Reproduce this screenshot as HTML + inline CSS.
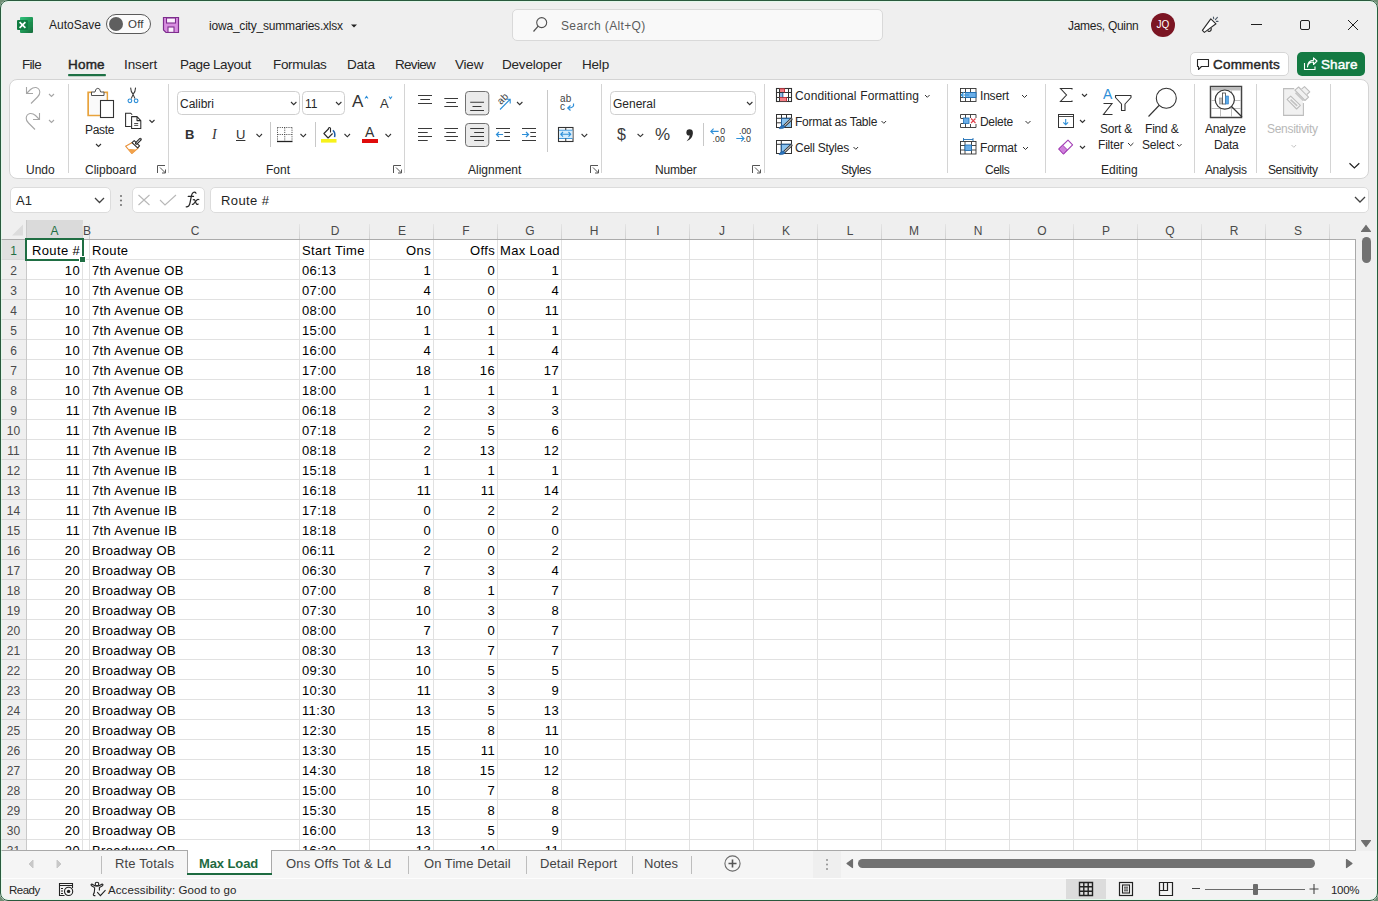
<!DOCTYPE html>
<html><head><meta charset="utf-8"><style>
*{box-sizing:border-box;margin:0;padding:0}
html,body{width:1378px;height:901px;overflow:hidden;background:#6f8f74}
body{font-family:"Liberation Sans",sans-serif;color:#262626;position:relative}
#win{position:absolute;left:0;top:0;width:1378px;height:901px;background:#efefef;border-radius:8px;overflow:hidden}
#frame{position:absolute;left:0;top:0;width:1378px;height:901px;border:1px solid #2a5a3e;border-radius:8px;pointer-events:none;box-shadow:inset 0 0 0 1px rgba(215,255,230,0.55)}
.a{position:absolute;white-space:nowrap}
.t12{font-size:12px;line-height:14px}
.t13{font-size:13px;line-height:15px}
/* title */
#title .txt{position:absolute;white-space:nowrap}
/* ribbon */
#ribbon{position:absolute;left:9px;top:79px;width:1360px;height:100px;background:#fff;border:1px solid #d4d4d4;border-radius:8px}
.sep{position:absolute;width:1px;background:#d6d6d6}
.glabel{position:absolute;top:163px;font-size:12px;line-height:14px;white-space:nowrap;color:#262626}
/* grid */
#grid{position:absolute;left:0;top:0;width:1378px;height:901px}
.colhdr{position:absolute;left:1px;top:220px;width:1355px;height:20px;background:#efefef}
.selhdrA{position:absolute;left:27px;top:220px;width:56px;height:19px;background:#dadada}
.selhdr1{position:absolute;left:1px;top:240px;width:25px;height:19px;background:#e0e0e0}
.hsep{position:absolute;top:224px;width:1px;height:15px;background:linear-gradient(#e4e4e4,#cfcfcf)}
.ch{position:absolute;top:220px;height:19px;line-height:23px;text-align:center;font-size:12px;color:#4a4a4a}
.ch.sel{color:#1f6f43}
.cells{position:absolute;left:26px;top:239px;width:1330px;height:612px;background:#fff;border-right:1px solid #a9a9a9;border-bottom:1px solid #a9a9a9}
.vl{position:absolute;top:240px;width:1px;height:610px;background:#e1e1e1}
.hl{position:absolute;left:26px;width:1329px;height:1px;background:#e1e1e1}
.rh{position:absolute;left:1px;width:25px;height:20px;line-height:23px;text-align:center;font-size:12px;color:#4a4a4a;background:#efefef;border-bottom:1px solid #d8d8d8}
.rhsep{position:absolute;left:26px;top:220px;width:1px;height:631px;background:#c9c9c9}
.hdrline{position:absolute;left:1px;top:239px;width:1355px;height:1px;background:#ababab}
.rh.sel{background:#e0e0e0;color:#1f6f43}
.ct{position:absolute;height:20px;line-height:20px;font-size:13px;letter-spacing:0.35px;color:#000;white-space:nowrap}
.ct.r{text-align:right}
.gridclip{position:absolute;left:0;top:851px;width:1378px;height:50px;background:#efefef}
.selbox{position:absolute;left:25px;top:238px;width:59px;height:23px;border:2px solid #1f6e43}
.fillh{position:absolute;left:80px;top:257px;width:5px;height:5px;background:#1f6e43;border:1px solid #fff;box-sizing:content-box;margin:-1px}

.tm{top:57px;font-size:13.5px;line-height:15px;color:#262626}

</style></head><body>
<div id="win">
<div id="title">
<svg class="a" style="left:16px;top:16px" width="18" height="18" viewBox="0 0 18 18">
<defs><linearGradient id="xg" x1="0" y1="0" x2="1" y2="1"><stop offset="0" stop-color="#33c27e"/><stop offset="0.5" stop-color="#1f9a57"/><stop offset="1" stop-color="#166b3c"/></linearGradient></defs>
<rect x="4" y="1" width="13" height="16" rx="1" fill="url(#xg)"/>
<rect x="4" y="6" width="13" height="5" fill="#1a8a4b" opacity="0.6"/>
<rect x="1" y="4" width="11" height="10" rx="1" fill="#107c41"/>
<path d="M3.6 6.2 L9.4 11.8 M9.4 6.2 L3.6 11.8" stroke="#fff" stroke-width="1.7"/>
</svg>
<div class="a" style="left:49px;top:18px;font-size:12px;line-height:14px;color:#1f1f1f">AutoSave</div>
<div class="a" style="left:106px;top:14px;width:45px;height:20px;border:1.4px solid #5a5a5a;border-radius:10px;background:#fbfbfb"></div>
<div class="a" style="left:109px;top:17px;width:14px;height:14px;border-radius:7px;background:#5f5f5f"></div>
<div class="a" style="left:128px;top:18px;font-size:11.5px;line-height:13px;letter-spacing:0.2px;color:#3a3a3a">Off</div>
<svg class="a" style="left:162px;top:16px" width="18" height="18" viewBox="0 0 18 18">
<path d="M1.5 1.5 H16.5 V16.5 H4 L1.5 14 Z" fill="#d88de0" stroke="#7e2d8e" stroke-width="1.2"/>
<rect x="4.5" y="2" width="9" height="5" fill="#fbeffc" stroke="#7e2d8e" stroke-width="1.1"/>
<rect x="6" y="11" width="6" height="5.4" fill="#fbeffc" stroke="#7e2d8e" stroke-width="1.1"/>
</svg>
<div class="a" style="left:209px;top:19px;font-size:12px;line-height:14px;letter-spacing:-0.2px;color:#1f1f1f">iowa_city_summaries.xlsx</div>
<svg class="a" style="left:350px;top:23px" width="8" height="6"><path d="M1 1.5 H7 L4 4.5 Z" fill="#222"/></svg>
<div class="a" style="left:512px;top:9px;width:371px;height:32px;background:#f9f9f9;border:1px solid #d9d9d9;border-radius:5px"></div>
<svg class="a" style="left:532px;top:16px" width="16" height="17"><circle cx="9.7" cy="6.6" r="5" fill="none" stroke="#505050" stroke-width="1.1"/><path d="M6.2 10.2 L1.5 15.5" stroke="#505050" stroke-width="1.2"/></svg>
<div class="a" style="left:561px;top:19px;font-size:12px;line-height:14px;letter-spacing:0.35px;color:#5c5c5c">Search (Alt+Q)</div>
<div class="a" style="left:1068px;top:19px;font-size:12px;line-height:14px;letter-spacing:-0.3px;color:#1f1f1f">James, Quinn</div>
<div class="a" style="left:1151px;top:13px;width:24px;height:24px;border-radius:12px;background:#7b1523"></div>
<div class="a" style="left:1151px;top:19px;width:24px;text-align:center;font-size:10px;line-height:12px;color:#fff">JQ</div>
<svg class="a" style="left:1198px;top:12px" width="24" height="24" viewBox="1198 12 24 24">
<path d="M1202.4 30.4 L1210.8 18.9 L1216 23.8 L1204.4 32.4 Z" fill="#fff" stroke="#2b2b2b" stroke-width="1.1" stroke-linejoin="round"/>
<path d="M1211.2 28 Q1211.6 31 1209.4 31.5 Q1208 31.7 1207.8 30.4" fill="none" stroke="#2b2b2b" stroke-width="1.1"/>
<path d="M1213.4 17 L1213.7 18.6 M1215.4 19.6 L1217.4 17.4 M1216.4 21.4 H1218" stroke="#4a5866" stroke-width="1.1" stroke-linecap="round"/>
</svg>
<div class="a" style="left:1251px;top:24px;width:11px;height:1px;background:#1f1f1f"></div>
<div class="a" style="left:1300px;top:20px;width:10px;height:10px;border:1px solid #1f1f1f;border-radius:2px"></div>
<svg class="a" style="left:1347px;top:19px" width="12" height="12"><path d="M1 1 L11 11 M11 1 L1 11" stroke="#1f1f1f" stroke-width="1"/></svg>
<!-- comments / share -->
<div class="a" style="left:1190px;top:52px;width:99px;height:24px;background:#fff;border:1px solid #d6d6d6;border-radius:5px"></div>
<svg class="a" style="left:1196px;top:58px" width="14" height="13"><path d="M1.5 1.5 H12.5 V8.5 H5.5 L2.5 11.5 V8.5 H1.5 Z" fill="none" stroke="#262626" stroke-width="1.1" stroke-linejoin="round"/></svg>
<div class="a" style="left:1213px;top:57px;font-size:13.5px;line-height:15px;letter-spacing:0.2px;-webkit-text-stroke:0.45px #262626;color:#262626">Comments</div>
<div class="a" style="left:1297px;top:52px;width:68px;height:24px;background:#147a43;border-radius:5px"></div>
<svg class="a" style="left:1303px;top:57px" width="15" height="14" viewBox="0 0 15 14"><path d="M1.5 6 V12.5 H12 V9.5" fill="none" stroke="#fff" stroke-width="1.1"/><path d="M4.5 10 Q5 5 10.5 5 V7.5 L14 4 L10.5 0.8 V3.2 Q4.5 3.5 4.5 10 Z" fill="none" stroke="#fff" stroke-width="1.1" stroke-linejoin="round"/></svg>
<div class="a" style="left:1321px;top:57px;font-size:13.5px;line-height:15px;letter-spacing:0.1px;-webkit-text-stroke:0.45px #fff;color:#fff">Share</div>
</div>
<div id="menu">
<div class="a tm" style="left:22px;letter-spacing:-0.7px">File</div>
<div class="a tm" style="left:68px;letter-spacing:0.2px;-webkit-text-stroke:0.45px #262626">Home</div>
<div class="a" style="left:68px;top:74px;width:38px;height:2px;border-radius:1px;background:#1e7145;box-shadow:0 0.5px 0 rgba(30,113,69,0.45)"></div>
<div class="a tm" style="left:124px;letter-spacing:-0.1px">Insert</div>
<div class="a tm" style="left:180px;letter-spacing:-0.45px">Page Layout</div>
<div class="a tm" style="left:273px;letter-spacing:-0.35px">Formulas</div>
<div class="a tm" style="left:347px;letter-spacing:-0.2px">Data</div>
<div class="a tm" style="left:395px;letter-spacing:-0.7px">Review</div>
<div class="a tm" style="left:455px;letter-spacing:-0.2px">View</div>
<div class="a tm" style="left:502px;letter-spacing:-0.2px">Developer</div>
<div class="a tm" style="left:582px;letter-spacing:-0.2px">Help</div>
</div>
<!-- formula bar -->
<div class="a" style="left:10px;top:187px;width:101px;height:26px;background:#fff;border:1px solid #dcdcdc;border-radius:5px"></div>
<div class="a t13" style="left:16px;top:193px;color:#262626">A1</div>
<svg class="a" style="left:94px;top:197px" width="11" height="7"><path d="M1 1 L5.5 5.5 L10 1" stroke="#424242" stroke-width="1.3" fill="none"/></svg>
<svg class="a" style="left:119px;top:194px" width="4" height="13"><circle cx="2" cy="2" r="1.1" fill="#777"/><circle cx="2" cy="6.5" r="1.1" fill="#777"/><circle cx="2" cy="11" r="1.1" fill="#777"/></svg>
<div class="a" style="left:132px;top:187px;width:73px;height:26px;background:#fff;border:1px solid #dcdcdc;border-radius:5px"></div>
<svg class="a" style="left:137px;top:194px" width="14" height="12"><path d="M1.5 1 L12.5 11 M12.5 1 L1.5 11" stroke="#b8b8b8" stroke-width="1.1" fill="none"/></svg>
<svg class="a" style="left:159px;top:194px" width="18" height="12"><path d="M1 6 L6 11 L17 1" stroke="#b8b8b8" stroke-width="1.1" fill="none"/></svg>
<svg class="a" style="left:180px;top:188px" width="24" height="22" viewBox="180 188 24 22"><g fill="none" stroke="#262626" stroke-linecap="round">
<path d="M196 193.2 Q195 191.5 193.2 192.5 Q191.8 193.4 191.2 196.8 L190 202.8 Q189.2 206.9 186.2 206.8" stroke-width="1.25"/>
<path d="M188.2 196.4 H193.6" stroke-width="1.1"/>
<path d="M193.3 199.8 Q194.4 199 194.9 200.3 L196.2 203.6 Q196.8 205 198.2 204" stroke-width="1.15"/>
<path d="M198.9 199.6 Q197.9 198.9 196.7 200.1 L193.8 203.7 Q193 204.8 192.3 204.3" stroke-width="1.15"/>
</g></svg>
<div class="a" style="left:210px;top:187px;width:1159px;height:26px;background:#fff;border:1px solid #dcdcdc;border-radius:5px"></div>
<div class="a t13" style="left:221px;top:193px;letter-spacing:0.4px;color:#1f1f1f">Route #</div>
<svg class="a" style="left:1354px;top:196px" width="12" height="8"><path d="M1 1 L6 6 L11 1" stroke="#424242" stroke-width="1.3" fill="none"/></svg>

<div id="ribbon"></div>
<svg class="a" style="left:0;top:0" width="1378" height="180" viewBox="0 0 1378 180">
<g fill="none" stroke-width="1" shape-rendering="geometricPrecision">
<!-- separators -->
<path d="M68.5 84 V173 M168.5 84 V173 M404.5 84 V173 M601.5 84 V173 M764.5 84 V173 M947.5 84 V173 M1045.5 84 V173 M1194.5 84 V173 M1256.5 84 V173 M1330.5 84 V173" stroke="#d4d4d4"/>
<path d="M270.5 122 V147 M315.5 122 V147 M547.5 90 V152 M703.5 123 V146" stroke="#c8c8c8"/>
<!-- undo / redo -->
<g stroke="#a6a6a6" stroke-width="1.1">
<path d="M26.5 87 V93.5 H33"/>
<path d="M27 93 L30.5 89.5 Q33 87.2 36 87.5 Q39.5 88.3 39.8 92 Q40 94.5 37.5 97 L31 103.5"/>
<path d="M39.5 113 V119.5 H33"/>
<path d="M39 119 L35.5 115.5 Q33 113.2 30 113.5 Q26.5 114.3 26.2 118 Q26 120.5 28.5 123 L35 129.5"/>
<path d="M49 94 L51.5 96.5 L54 94 M49 120 L51.5 122.5 L54 120"/>
</g>
<!-- paste -->
<path d="M92 92.5 H88.2 V115.3 H100" stroke="#e8a33d" stroke-width="1.8"/>
<path d="M103.5 92.5 H107.2 V100" stroke="#e8a33d" stroke-width="1.8"/>
<rect x="89" y="93.3" width="17.5" height="21.2" fill="#fafafa" stroke="none"/>
<path d="M91.5 95.5 V92 H95 Q95.5 88.3 97.8 88.3 Q100.2 88.3 100.6 92 H104 V95.5 Z" fill="#fff" stroke="#505050" stroke-width="1"/>
<rect x="100.5" y="100.5" width="13" height="17" fill="#fff" stroke="#333" stroke-width="1.1"/>
<path d="M96 144 L98.5 146.5 L101 144" stroke="#333" stroke-width="1.1"/>
<!-- cut -->
<path d="M130.6 87.6 Q130.8 91.6 133 94.2 L135 98.6 M135.6 87.6 Q135.4 91.6 133.2 94.2 L131.2 98.6" stroke="#3a3a3a" stroke-width="1.05"/>
<circle cx="129.9" cy="100.8" r="1.85" stroke="#2e8fd8" stroke-width="1.15"/>
<circle cx="136.1" cy="100.8" r="1.85" stroke="#2e8fd8" stroke-width="1.15"/>
<!-- copy -->
<path d="M130.8 126.5 H125.6 V113.2 H130.6 L132.2 114.6" stroke="#2b2b2b" stroke-width="1.05"/>
<path d="M131.6 116.6 H137 L140.8 120.6 V128.5 H131.6 Z M137 116.6 V120.6 H140.8" fill="#fff" stroke="#2b2b2b" stroke-width="1.05" stroke-linejoin="round"/>
<path d="M134.2 123.5 H138.2 M134.2 125.4 H138.2" stroke="#3a3a3a" stroke-width="0.9"/>
<path d="M149.5 120 L152 122.5 L154.5 120" stroke="#333" stroke-width="1.1"/>
<!-- format painter -->
<path d="M125.6 146.2 L132.3 142.6 L138.4 147.8 L131.8 153.5 Z" fill="#fff" stroke="#e8913a" stroke-width="1.1" stroke-linejoin="round"/>
<path d="M127.8 149.2 Q132 148.5 136.6 149.8 L131.8 153.5 Z" fill="#f2a24a" stroke="none"/>
<path d="M132 142.6 L134.2 140.6 L139.6 145.8 L137.6 147.9 Z" fill="#fff" stroke="#2e2e2e" stroke-width="1.1" stroke-linejoin="round"/>
<path d="M136.4 143.2 L140.3 139.4" stroke="#2e2e2e" stroke-width="3" stroke-linecap="round"/>
<path d="M136.8 142.8 L140.1 139.6" stroke="#fff" stroke-width="1" stroke-linecap="round"/>
<!-- font boxes -->
<rect x="177.5" y="91.5" width="122" height="23" rx="4" fill="#fff" stroke="#cfcfcf"/>
<path d="M291 102 L293.7 104.7 L296.4 102" stroke="#333" stroke-width="1.1"/>
<rect x="302.5" y="91.5" width="42" height="23" rx="4" fill="#fff" stroke="#cfcfcf"/>
<path d="M336 102 L338.7 104.7 L341.4 102" stroke="#333" stroke-width="1.1"/>
<path d="M365 98.5 L366.5 96.5 L368 98.5" stroke="#2e8fd8" stroke-width="1.1"/>
<path d="M389 96.5 L390.5 98.5 L392 96.5" stroke="#2e8fd8" stroke-width="1.1"/>
<!-- borders icon -->
<path d="M277.5 127.5 H292 M277.5 127.5 V141 M292 127.5 V141 M284.75 127.5 V141 M277.5 134.5 H292" stroke="#444" stroke-width="1" stroke-dasharray="1 1.2"/>
<path d="M277 141.5 H292.5" stroke="#222" stroke-width="1.3"/>
<path d="M256.5 134 L259.3 136.8 L262 134 M300.5 134 L303.3 136.8 L306 134 M344.5 134 L347.3 136.8 L350 134 M385.5 134 L388.3 136.8 L391 134" stroke="#333" stroke-width="1.1"/>
<!-- fill color -->
<path d="M328.4 129 L323.9 133.5 L328.1 138 L332.6 133.5" stroke="#2a2a2a" stroke-width="1.1" stroke-linejoin="round"/>
<path d="M328.4 129.5 V128.4 Q329.4 126.6 330.5 128.4 V132.4" stroke="#2a2a2a" stroke-width="1.1"/>
<path d="M332.8 130.4 Q335.6 132.5 334.6 137.2" stroke="#1f5fa8" stroke-width="1.5"/>
<rect x="321" y="139" width="15.5" height="3.6" fill="#f7f21b" stroke="none"/>
<rect x="362" y="139" width="16" height="4" fill="#e00b0b" stroke="none"/>
<!-- alignment lines -->
<g stroke="#3a3a3a" stroke-width="1.05">
<path d="M418 95.5 H432 M420.3 99.5 H430 M418 103.5 H432"/>
<path d="M444.3 98.5 H458 M446.3 102.5 H456 M444.3 106.5 H458"/>
<path d="M418 128.5 H432 M418 132.5 H427.7 M418 136.5 H432 M418 140.5 H427.7"/>
<path d="M444.3 128.5 H458 M446.3 132.5 H455.8 M444.3 136.5 H458 M446.3 140.5 H455.8"/>
</g>
<rect x="465.5" y="91.5" width="23.3" height="23.3" rx="3.2" fill="#ebebeb" stroke="#707070"/>
<rect x="465.5" y="123.5" width="23.3" height="23" rx="3.2" fill="#ebebeb" stroke="#707070"/>
<g stroke="#3a3a3a" stroke-width="1.05">
<path d="M470.2 102.3 H484 M472.5 106.4 H481.5 M470.2 110.5 H484"/>
<path d="M470.2 128.5 H484 M474.2 132.5 H484 M470.2 136.5 H484 M474.2 140.5 H484"/>
<path d="M496 128.5 H510 M504.3 132.5 H510 M504.3 136.5 H510 M496 140.5 H510"/>
<path d="M522 128.5 H536 M530.3 132.5 H536 M530.3 136.5 H536 M522 140.5 H536"/>
</g>
<path d="M503 134.5 H496.5 M499 132 L496.5 134.5 L499 137" stroke="#2e8fd8" stroke-width="1.2"/>
<path d="M522 134.5 H528.5 M526 132 L528.5 134.5 L526 137" stroke="#2e8fd8" stroke-width="1.2"/>
<!-- orientation -->
<path d="M500 109.5 L510 99.5 M506 99.3 H510.2 V103.5" stroke="#2e8fd8" stroke-width="1.1"/>
<path d="M517 102 L519.7 104.7 L522.4 102" stroke="#333" stroke-width="1.1"/>
<!-- wrap text arrow -->
<path d="M573.5 103.5 Q574.5 108 568 108 M570.5 105.5 L567.8 108 L570.5 110.5" stroke="#2e8fd8" stroke-width="1.2"/>
<!-- merge -->
<rect x="558.5" y="127.5" width="14.5" height="14" fill="#fff" stroke="#333" stroke-width="1.1"/>
<rect x="559" y="130.2" width="13.5" height="8.3" fill="#d5ecfb" stroke="none"/><path d="M559 130.2 H572.5 M559 138.5 H572.5" stroke="#2e8fd8" stroke-width="0.9"/>
<path d="M565.75 127.5 V130 M565.75 138.5 V141.5" stroke="#333"/>
<path d="M560.8 134.3 H570.7 M563 132 L560.8 134.3 L563 136.6 M568.5 132 L570.7 134.3 L568.5 136.6" stroke="#2e8fd8" stroke-width="1.1"/>
<path d="M581.6 134 L584.4 136.8 L587.2 134" stroke="#333" stroke-width="1.1"/>
<!-- number -->
<rect x="610.5" y="91.5" width="145" height="23" rx="4" fill="#fff" stroke="#cfcfcf"/>
<path d="M747 102 L749.7 104.7 L752.4 102" stroke="#333" stroke-width="1.1"/>
<path d="M637.6 134 L640.4 136.6 L643.2 134" stroke="#333" stroke-width="1.1"/>
<path d="M718.6 131.4 H710.8 M713.6 128.6 L710.8 131.4 L713.6 134.2" stroke="#2e8fd8" stroke-width="1.1"/>
<path d="M736.3 138.5 H744 M741.2 135.7 L744 138.5 L741.2 141.3" stroke="#2e8fd8" stroke-width="1.1"/>
<g stroke="none" fill="#333" font-family="Liberation Sans" font-size="8.8px">
<text x="720.3" y="133.7">0</text>
<text x="712.6" y="141.7">.00</text>
<text x="739" y="133.7">.00</text>
<text x="743.6" y="141.7">.0</text>
</g>
<circle cx="689.6" cy="132.4" r="3.2" fill="#2b2b2b" stroke="none"/><path d="M692.7 132.8 Q693 138.8 686.6 141.3 Q689.9 138.2 689.6 135.4 Z" fill="#2b2b2b" stroke="none"/>
<!-- dialog launchers -->
<g stroke="#555" stroke-width="1">
<path d="M157.5 173 V165.5 H165 M160 167.5 L165.5 173 M162 173 H165.5 V169.5"/>
<path d="M393.5 173 V165.5 H401 M396 167.5 L401.5 173 M398 173 H401.5 V169.5"/>
<path d="M590.5 173 V165.5 H598 M593 167.5 L598.5 173 M595 173 H598.5 V169.5"/>
<path d="M752.5 173 V165.5 H760 M755 167.5 L760.5 173 M757 173 H760.5 V169.5"/>
</g>
<!-- conditional formatting -->
<rect x="776.5" y="88.5" width="15" height="13" fill="#fff" stroke="#333" stroke-width="1.1"/>
<rect x="779.5" y="88.8" width="5" height="3.7" fill="#f47f86" stroke="none"/>
<rect x="779.5" y="97.5" width="7" height="3.7" fill="#f47f86" stroke="none"/>
<rect x="779.5" y="92.5" width="3" height="5" fill="#8dbbe6" stroke="none"/>
<path d="M779.5 88.5 V101.5 M788.5 88.5 V101.5 M776.5 92.5 H791.5 M776.5 97.5 H791.5" stroke="#333" stroke-width="1"/>
<path d="M779.5 88.8 H784.5 V92.5 M779.5 97.5 H786.5 V101.3" stroke="#c8353f" stroke-width="1"/>
<path d="M782.8 92.5 V97.5" stroke="#1f4f8a" stroke-width="1"/>
<!-- format as table -->
<rect x="776.5" y="114.5" width="15" height="13" fill="#fff" stroke="#333" stroke-width="1"/>
<path d="M781.5 114.5 V127.5 M786.5 114.5 V118.3 M776.5 118.3 H791.5 M776.5 122.8 H781.5" stroke="#333" stroke-width="1"/>
<rect x="782" y="118.8" width="9" height="8.2" fill="#8cc4f0" stroke="none"/>
<path d="M781.5 127.5 V118.3 H791.5" stroke="#1f5f9f" stroke-width="1"/>
<path d="M791.3 119.2 L784.3 126" stroke="#333" stroke-width="2.6" stroke-linecap="round"/>
<path d="M791.2 119.3 L784.5 125.8" stroke="#fff" stroke-width="1" stroke-linecap="round"/>
<path d="M779.2 128.6 Q780 125.6 783.6 125.2 L785 126.6 Q784.2 128.8 779.2 128.6 Z" fill="#2a73bd" stroke="#1f5f9f" stroke-width="0.7"/>
<!-- cell styles -->
<rect x="776.5" y="140.5" width="15" height="13" fill="#fff" stroke="#333" stroke-width="1"/>
<path d="M776.5 144.3 H791.5 M781.3 140.5 V153.5" stroke="#333" stroke-width="1"/>
<path d="M781.8 144.8 H791 V146 L783 153 H781.8 Z" fill="#8cc4f0" stroke="none"/>
<path d="M781.3 153.5 V144.3 H791.5" stroke="#1f5f9f" stroke-width="1"/>
<path d="M791.3 145.3 L784.3 152" stroke="#333" stroke-width="2.6" stroke-linecap="round"/>
<path d="M791.2 145.4 L784.5 151.8" stroke="#fff" stroke-width="1" stroke-linecap="round"/>
<path d="M779.2 154.6 Q780 151.6 783.6 151.2 L785 152.6 Q784.2 154.8 779.2 154.6 Z" fill="#2a73bd" stroke="#1f5f9f" stroke-width="0.7"/>
<path d="M925 95 L927.3 97.3 L929.6 95 M881.5 121 L883.8 123.3 L886.1 121 M853.5 147 L855.8 149.3 L858.1 147" stroke="#333" stroke-width="1"/>
<!-- cells: insert -->
<rect x="960.5" y="88.5" width="15.5" height="13" fill="#fff" stroke="#333" stroke-width="0.9"/>
<path d="M960.5 92.5 H976 M960.5 97.5 H976 M965.5 88.5 V101.5 M970.5 88.5 V101.5" stroke="#333" stroke-width="0.9"/>
<rect x="965.5" y="92.5" width="10.5" height="5" fill="#6aaee8" stroke="#1f6fb5" stroke-width="0.9"/>
<path d="M960.8 92.8 V97.2" stroke="#fff" stroke-width="0"/>
<rect x="961" y="93" width="4.3" height="4" fill="#fff" stroke="none"/>
<path d="M969 95 H961.2 M964 92.2 L961.2 95 L964 97.8" stroke="#2e8fd8" stroke-width="1.1"/>
<!-- delete -->
<path d="M960.5 114.5 H976 M960.5 127.5 H976 M965.5 114.5 V127.5 M970.5 114.5 V118 M970.5 124 V127.5 M960.5 114.5 V118 M960.5 124 V127.5 M976 114.5 V118 M976 124 V127.5 M960.5 118.5 H964 M960.5 123.5 H964" stroke="#333" stroke-width="0.9"/>
<rect x="963.5" y="118" width="5.5" height="5.5" fill="#6aaee8" stroke="#1f6fb5" stroke-width="0.8"/>
<path d="M971 118.5 L975.5 123 M975.5 118.5 L971 123" stroke="#e0404a" stroke-width="1.1"/>
<!-- format -->
<rect x="960.5" y="141.5" width="15.5" height="12.5" fill="#fff" stroke="#333" stroke-width="0.9"/>
<path d="M960.5 145.5 H976 M960.5 150 H976 M965 141.5 V154 M971.5 141.5 V154" stroke="#333" stroke-width="0.9"/>
<rect x="965" y="145" width="6.5" height="5.5" fill="#6aaee8" stroke="#1f6fb5" stroke-width="0.8"/>
<path d="M963.5 139.5 H973 M963.5 138 V141 M973 138 V141" stroke="#1f6fb5" stroke-width="0.9"/>
<path d="M1022 95 L1024.5 97.5 L1027 95 M1025.5 121 L1028 123.5 L1030.5 121 M1023 147 L1025.5 149.5 L1028 147" stroke="#333" stroke-width="1"/>
<!-- editing -->
<path d="M1072 89.5 V88.5 H1060.5 L1066.5 95 L1060.5 101.5 H1072 V100.5" stroke="#333" stroke-width="1.1"/>
<path d="M1082 94 L1084.5 96.5 L1087 94 M1080 120 L1082.5 122.5 L1085 120 M1080 146 L1082.5 148.5 L1085 146" stroke="#333" stroke-width="1.1"/>
<rect x="1058.5" y="114.5" width="15" height="13" fill="#fff" stroke="#333" stroke-width="1"/>
<path d="M1058.5 116.5 H1073.5" stroke="#333" stroke-width="0.9"/>
<path d="M1065.7 119 V124.5 M1063.3 122.3 L1065.7 124.7 L1068.1 122.3" stroke="#2e8fd8" stroke-width="1.1"/>
<path d="M1058.8 149 L1068 140.2 L1072.6 144.8 L1063.4 154 Z" fill="#fff" stroke="#a33fb5" stroke-width="1.1" stroke-linejoin="round"/>
<path d="M1058.8 149 L1062.7 145.2 L1067.3 149.8 L1063.4 154 Z" fill="#cf7fdc" stroke="#a33fb5" stroke-width="1" stroke-linejoin="round"/>
<path d="M1103.5 112 V89 M1104 100.5 L1108 89.5 L1112.5 100.5 M1105.2 96.5 H1110.8" stroke="#2e8fd8" stroke-width="0" />
<path d="M1103.5 103.5 H1112 L1103.5 114.5 H1112.5" stroke="#333" stroke-width="1.1"/>
<path d="M1115.5 95.5 H1131 V97.5 L1125 104 V110.5 H1121.5 V104 L1115.5 97.5 Z" fill="#fff" stroke="#333" stroke-width="1.1" stroke-linejoin="round"/>
<path d="M1128 143 L1130.7 145.7 L1133.4 143 M1177 144 L1179.3 146.3 L1181.6 144" stroke="#333" stroke-width="1"/>
<circle cx="1166.3" cy="98.3" r="10" stroke="#333" stroke-width="1.1"/>
<path d="M1159 105.5 L1148.5 116.5" stroke="#333" stroke-width="1.1"/>
<!-- analyze data -->
<rect x="1210.5" y="86.5" width="31" height="31" fill="#fff" stroke="#444" stroke-width="1.5"/>
<rect x="1211" y="87" width="30" height="3.5" fill="#bdbdbd" stroke="none"/>
<path d="M1211 100.5 H1241 M1211 108.5 H1241 M1220.5 90.5 V117 M1231.5 90.5 V117" stroke="#bdbdbd" stroke-width="1"/>
<circle cx="1224.8" cy="99.6" r="9.6" fill="#fff" stroke="#333" stroke-width="1.2"/>
<rect x="1219.5" y="98" width="3" height="6" fill="#bdbdbd" stroke="#888" stroke-width="0.6"/>
<rect x="1222.5" y="93" width="3" height="11" fill="#fff" stroke="#444" stroke-width="0.8"/>
<rect x="1225.5" y="96" width="3" height="8" fill="#5aaae8" stroke="#2e7bc4" stroke-width="0.6"/>
<path d="M1231.5 106.5 L1242 117" stroke="#333" stroke-width="1.3"/>
<!-- sensitivity -->
<path d="M1294.2 88.6 H1283.6 V115.4 H1303.4 V103" fill="#f1f1f1" stroke="#bdbdbd" stroke-width="1.1"/>
<path d="M1287.1 99.3 L1290.7 96.1 L1300.4 105.4 L1296.6 109 Z" fill="#f4f4f4" stroke="#bdbdbd" stroke-width="1.1" stroke-linejoin="round"/>
<path d="M1290.6 99.6 L1297.2 105.9" stroke="#c2c2c2" stroke-width="1.6"/>
<path d="M1294.9 90.2 L1298.6 87 L1308.6 97.2 L1305 100.5 Z" fill="#f1f1f1" stroke="#bdbdbd" stroke-width="1.1" stroke-linejoin="round"/>
<path d="M1295.6 92.6 L1303.6 100.6" stroke="#c8c8c8" stroke-width="2"/>
<path d="M1301.5 89.2 L1304.5 86.6 L1309.8 91.8 L1306.8 94.5" fill="#f1f1f1" stroke="#bdbdbd" stroke-width="1.1" stroke-linejoin="round"/>
<path d="M1291.5 145 L1293.8 147.3 L1296.1 145" stroke="#c4c4c4" stroke-width="1"/>
<path d="M1349.5 163.2 L1354.4 168 L1359.3 163.2" stroke="#222" stroke-width="1.2"/>
</g>
</svg>
<!-- ribbon text -->
<div class="a" style="left:180px;top:97px;font-size:12px;line-height:14px;color:#262626">Calibri</div>
<div class="a" style="left:305px;top:97px;font-size:12px;line-height:14px;color:#262626">11</div>
<div class="a" style="left:352px;top:93px;font-size:17px;line-height:18px;color:#333">A</div>
<div class="a" style="left:380px;top:97px;font-size:13px;line-height:14px;color:#333">A</div>
<div class="a" style="left:185px;top:127px;font-size:13px;line-height:15px;font-weight:bold;color:#333">B</div>
<div class="a" style="left:212px;top:127px;font-family:'Liberation Serif',serif;font-size:14px;line-height:15px;font-style:italic;color:#333">I</div>
<div class="a" style="left:236px;top:127px;font-size:13px;line-height:15px;text-decoration:underline;color:#333">U</div>
<div class="a" style="left:365px;top:125px;font-size:14px;line-height:15px;color:#333">A</div>
<div class="a" style="left:497px;top:93px;font-size:10px;line-height:11px;color:#444;transform:rotate(-45deg);transform-origin:50% 50%">ab</div>
<div class="a" style="left:560px;top:93px;font-size:10px;line-height:11px;color:#444;letter-spacing:0.3px">ab</div>
<div class="a" style="left:560px;top:100.5px;font-size:10px;line-height:11px;color:#444">c</div>
<div class="a" style="left:613px;top:97px;font-size:12px;line-height:14px;color:#262626">General</div>
<div class="a" style="left:617px;top:126px;font-size:16px;line-height:18px;color:#3a3a3a">$</div>
<div class="a" style="left:655px;top:126px;font-size:17px;line-height:18px;color:#3a3a3a">%</div>
<div class="a" style="left:795px;top:89px;font-size:12px;line-height:14px;letter-spacing:0.15px;color:#262626">Conditional Formatting</div>
<div class="a" style="left:795px;top:115px;font-size:12px;line-height:14px;letter-spacing:-0.25px;color:#262626">Format as Table</div>
<div class="a" style="left:795px;top:141px;font-size:12px;line-height:14px;letter-spacing:-0.25px;color:#262626">Cell Styles</div>
<div class="a" style="left:980px;top:89px;font-size:12px;line-height:14px;letter-spacing:-0.2px;color:#262626">Insert</div>
<div class="a" style="left:980px;top:115px;font-size:12px;line-height:14px;letter-spacing:-0.3px;color:#262626">Delete</div>
<div class="a" style="left:980px;top:141px;font-size:12px;line-height:14px;letter-spacing:-0.2px;color:#262626">Format</div>
<div class="a" style="left:1103px;top:86px;font-size:15.5px;line-height:15px;transform:scaleX(0.9);transform-origin:0 0;color:#2e8fd8">A</div>
<div class="a" style="left:1100px;top:122px;font-size:12px;line-height:14px;letter-spacing:-0.2px;color:#262626">Sort &amp;</div>
<div class="a" style="left:1098px;top:138px;font-size:12px;line-height:14px;letter-spacing:-0.2px;color:#262626">Filter</div>
<div class="a" style="left:1145px;top:122px;font-size:12px;line-height:14px;letter-spacing:-0.2px;color:#262626">Find &amp;</div>
<div class="a" style="left:1142px;top:138px;font-size:12px;line-height:14px;letter-spacing:-0.2px;color:#262626">Select</div>
<div class="a" style="left:1205px;top:122px;font-size:12px;line-height:14px;letter-spacing:-0.3px;color:#262626">Analyze</div>
<div class="a" style="left:1214px;top:138px;font-size:12px;line-height:14px;letter-spacing:-0.2px;color:#262626">Data</div>
<div class="a" style="left:1267px;top:122px;font-size:12px;line-height:14px;letter-spacing:-0.3px;color:#b8b8b8">Sensitivity</div>
<div class="a" style="left:85px;top:123px;font-size:12px;line-height:14px;letter-spacing:-0.3px;color:#262626">Paste</div>
<div class="glabel" style="left:26px">Undo</div>
<div class="glabel" style="left:85px">Clipboard</div>
<div class="glabel" style="left:266px">Font</div>
<div class="glabel" style="left:468px">Alignment</div>
<div class="glabel" style="left:655px;letter-spacing:-0.2px">Number</div>
<div class="glabel" style="left:841px;letter-spacing:-0.5px">Styles</div>
<div class="glabel" style="left:985px;letter-spacing:-0.5px">Cells</div>
<div class="glabel" style="left:1101px">Editing</div>
<div class="glabel" style="left:1205px;letter-spacing:-0.4px">Analysis</div>
<div class="glabel" style="left:1268px;letter-spacing:-0.4px">Sensitivity</div>

<div id="grid">
<div class="colhdr"></div>
<div class="selhdrA"></div><div class="selhdr1"></div>
<svg style="position:absolute;left:12px;top:224px" width="12" height="12"><path d="M11 0.5 L11 11.5 L0 11.5 Z" fill="#dcdcdc"/></svg>
<div class="hsep" style="left:82px"></div>
<div class="ch sel" style="left:26px;width:57px">A</div>
<div class="hsep" style="left:89px"></div>
<div class="ch" style="left:83px;width:7px">B</div>
<div class="hsep" style="left:299px"></div>
<div class="ch" style="left:90px;width:210px">C</div>
<div class="hsep" style="left:369px"></div>
<div class="ch" style="left:300px;width:70px">D</div>
<div class="hsep" style="left:433px"></div>
<div class="ch" style="left:370px;width:64px">E</div>
<div class="hsep" style="left:497px"></div>
<div class="ch" style="left:434px;width:64px">F</div>
<div class="hsep" style="left:561px"></div>
<div class="ch" style="left:498px;width:64px">G</div>
<div class="hsep" style="left:625px"></div>
<div class="ch" style="left:562px;width:64px">H</div>
<div class="hsep" style="left:689px"></div>
<div class="ch" style="left:626px;width:64px">I</div>
<div class="hsep" style="left:753px"></div>
<div class="ch" style="left:690px;width:64px">J</div>
<div class="hsep" style="left:817px"></div>
<div class="ch" style="left:754px;width:64px">K</div>
<div class="hsep" style="left:881px"></div>
<div class="ch" style="left:818px;width:64px">L</div>
<div class="hsep" style="left:945px"></div>
<div class="ch" style="left:882px;width:64px">M</div>
<div class="hsep" style="left:1009px"></div>
<div class="ch" style="left:946px;width:64px">N</div>
<div class="hsep" style="left:1073px"></div>
<div class="ch" style="left:1010px;width:64px">O</div>
<div class="hsep" style="left:1137px"></div>
<div class="ch" style="left:1074px;width:64px">P</div>
<div class="hsep" style="left:1201px"></div>
<div class="ch" style="left:1138px;width:64px">Q</div>
<div class="hsep" style="left:1265px"></div>
<div class="ch" style="left:1202px;width:64px">R</div>
<div class="hsep" style="left:1329px"></div>
<div class="ch" style="left:1266px;width:64px">S</div>
<div class="hsep" style="left:1393px"></div>
<div class="cells"></div>
<div class="vl" style="left:82px"></div>
<div class="vl" style="left:89px"></div>
<div class="vl" style="left:299px"></div>
<div class="vl" style="left:369px"></div>
<div class="vl" style="left:433px"></div>
<div class="vl" style="left:497px"></div>
<div class="vl" style="left:561px"></div>
<div class="vl" style="left:625px"></div>
<div class="vl" style="left:689px"></div>
<div class="vl" style="left:753px"></div>
<div class="vl" style="left:817px"></div>
<div class="vl" style="left:881px"></div>
<div class="vl" style="left:945px"></div>
<div class="vl" style="left:1009px"></div>
<div class="vl" style="left:1073px"></div>
<div class="vl" style="left:1137px"></div>
<div class="vl" style="left:1201px"></div>
<div class="vl" style="left:1265px"></div>
<div class="vl" style="left:1329px"></div>
<div class="hl" style="top:259px"></div>
<div class="hl" style="top:279px"></div>
<div class="hl" style="top:299px"></div>
<div class="hl" style="top:319px"></div>
<div class="hl" style="top:339px"></div>
<div class="hl" style="top:359px"></div>
<div class="hl" style="top:379px"></div>
<div class="hl" style="top:399px"></div>
<div class="hl" style="top:419px"></div>
<div class="hl" style="top:439px"></div>
<div class="hl" style="top:459px"></div>
<div class="hl" style="top:479px"></div>
<div class="hl" style="top:499px"></div>
<div class="hl" style="top:519px"></div>
<div class="hl" style="top:539px"></div>
<div class="hl" style="top:559px"></div>
<div class="hl" style="top:579px"></div>
<div class="hl" style="top:599px"></div>
<div class="hl" style="top:619px"></div>
<div class="hl" style="top:639px"></div>
<div class="hl" style="top:659px"></div>
<div class="hl" style="top:679px"></div>
<div class="hl" style="top:699px"></div>
<div class="hl" style="top:719px"></div>
<div class="hl" style="top:739px"></div>
<div class="hl" style="top:759px"></div>
<div class="hl" style="top:779px"></div>
<div class="hl" style="top:799px"></div>
<div class="hl" style="top:819px"></div>
<div class="hl" style="top:839px"></div>
<div class="rh sel" style="top:240px">1</div>
<div class="rh" style="top:260px">2</div>
<div class="rh" style="top:280px">3</div>
<div class="rh" style="top:300px">4</div>
<div class="rh" style="top:320px">5</div>
<div class="rh" style="top:340px">6</div>
<div class="rh" style="top:360px">7</div>
<div class="rh" style="top:380px">8</div>
<div class="rh" style="top:400px">9</div>
<div class="rh" style="top:420px">10</div>
<div class="rh" style="top:440px">11</div>
<div class="rh" style="top:460px">12</div>
<div class="rh" style="top:480px">13</div>
<div class="rh" style="top:500px">14</div>
<div class="rh" style="top:520px">15</div>
<div class="rh" style="top:540px">16</div>
<div class="rh" style="top:560px">17</div>
<div class="rh" style="top:580px">18</div>
<div class="rh" style="top:600px">19</div>
<div class="rh" style="top:620px">20</div>
<div class="rh" style="top:640px">21</div>
<div class="rh" style="top:660px">22</div>
<div class="rh" style="top:680px">23</div>
<div class="rh" style="top:700px">24</div>
<div class="rh" style="top:720px">25</div>
<div class="rh" style="top:740px">26</div>
<div class="rh" style="top:760px">27</div>
<div class="rh" style="top:780px">28</div>
<div class="rh" style="top:800px">29</div>
<div class="rh" style="top:820px">30</div>
<div class="rh" style="top:840px">31</div>
<div class="ct r" style="top:241px;left:26px;width:54px">Route #</div>
<div class="ct" style="top:241px;left:92px">Route</div>
<div class="ct" style="top:241px;left:302px">Start Time</div>
<div class="ct r" style="top:241px;left:370px;width:61px">Ons</div>
<div class="ct r" style="top:241px;left:434px;width:61px">Offs</div>
<div class="ct" style="top:241px;left:500px">Max Load</div>
<div class="ct r" style="top:261px;left:26px;width:54px">10</div>
<div class="ct" style="top:261px;left:92px">7th Avenue OB</div>
<div class="ct" style="top:261px;left:302px">06:13</div>
<div class="ct r" style="top:261px;left:370px;width:61px">1</div>
<div class="ct r" style="top:261px;left:434px;width:61px">0</div>
<div class="ct r" style="top:261px;left:498px;width:61px">1</div>
<div class="ct r" style="top:281px;left:26px;width:54px">10</div>
<div class="ct" style="top:281px;left:92px">7th Avenue OB</div>
<div class="ct" style="top:281px;left:302px">07:00</div>
<div class="ct r" style="top:281px;left:370px;width:61px">4</div>
<div class="ct r" style="top:281px;left:434px;width:61px">0</div>
<div class="ct r" style="top:281px;left:498px;width:61px">4</div>
<div class="ct r" style="top:301px;left:26px;width:54px">10</div>
<div class="ct" style="top:301px;left:92px">7th Avenue OB</div>
<div class="ct" style="top:301px;left:302px">08:00</div>
<div class="ct r" style="top:301px;left:370px;width:61px">10</div>
<div class="ct r" style="top:301px;left:434px;width:61px">0</div>
<div class="ct r" style="top:301px;left:498px;width:61px">11</div>
<div class="ct r" style="top:321px;left:26px;width:54px">10</div>
<div class="ct" style="top:321px;left:92px">7th Avenue OB</div>
<div class="ct" style="top:321px;left:302px">15:00</div>
<div class="ct r" style="top:321px;left:370px;width:61px">1</div>
<div class="ct r" style="top:321px;left:434px;width:61px">1</div>
<div class="ct r" style="top:321px;left:498px;width:61px">1</div>
<div class="ct r" style="top:341px;left:26px;width:54px">10</div>
<div class="ct" style="top:341px;left:92px">7th Avenue OB</div>
<div class="ct" style="top:341px;left:302px">16:00</div>
<div class="ct r" style="top:341px;left:370px;width:61px">4</div>
<div class="ct r" style="top:341px;left:434px;width:61px">1</div>
<div class="ct r" style="top:341px;left:498px;width:61px">4</div>
<div class="ct r" style="top:361px;left:26px;width:54px">10</div>
<div class="ct" style="top:361px;left:92px">7th Avenue OB</div>
<div class="ct" style="top:361px;left:302px">17:00</div>
<div class="ct r" style="top:361px;left:370px;width:61px">18</div>
<div class="ct r" style="top:361px;left:434px;width:61px">16</div>
<div class="ct r" style="top:361px;left:498px;width:61px">17</div>
<div class="ct r" style="top:381px;left:26px;width:54px">10</div>
<div class="ct" style="top:381px;left:92px">7th Avenue OB</div>
<div class="ct" style="top:381px;left:302px">18:00</div>
<div class="ct r" style="top:381px;left:370px;width:61px">1</div>
<div class="ct r" style="top:381px;left:434px;width:61px">1</div>
<div class="ct r" style="top:381px;left:498px;width:61px">1</div>
<div class="ct r" style="top:401px;left:26px;width:54px">11</div>
<div class="ct" style="top:401px;left:92px">7th Avenue IB</div>
<div class="ct" style="top:401px;left:302px">06:18</div>
<div class="ct r" style="top:401px;left:370px;width:61px">2</div>
<div class="ct r" style="top:401px;left:434px;width:61px">3</div>
<div class="ct r" style="top:401px;left:498px;width:61px">3</div>
<div class="ct r" style="top:421px;left:26px;width:54px">11</div>
<div class="ct" style="top:421px;left:92px">7th Avenue IB</div>
<div class="ct" style="top:421px;left:302px">07:18</div>
<div class="ct r" style="top:421px;left:370px;width:61px">2</div>
<div class="ct r" style="top:421px;left:434px;width:61px">5</div>
<div class="ct r" style="top:421px;left:498px;width:61px">6</div>
<div class="ct r" style="top:441px;left:26px;width:54px">11</div>
<div class="ct" style="top:441px;left:92px">7th Avenue IB</div>
<div class="ct" style="top:441px;left:302px">08:18</div>
<div class="ct r" style="top:441px;left:370px;width:61px">2</div>
<div class="ct r" style="top:441px;left:434px;width:61px">13</div>
<div class="ct r" style="top:441px;left:498px;width:61px">12</div>
<div class="ct r" style="top:461px;left:26px;width:54px">11</div>
<div class="ct" style="top:461px;left:92px">7th Avenue IB</div>
<div class="ct" style="top:461px;left:302px">15:18</div>
<div class="ct r" style="top:461px;left:370px;width:61px">1</div>
<div class="ct r" style="top:461px;left:434px;width:61px">1</div>
<div class="ct r" style="top:461px;left:498px;width:61px">1</div>
<div class="ct r" style="top:481px;left:26px;width:54px">11</div>
<div class="ct" style="top:481px;left:92px">7th Avenue IB</div>
<div class="ct" style="top:481px;left:302px">16:18</div>
<div class="ct r" style="top:481px;left:370px;width:61px">11</div>
<div class="ct r" style="top:481px;left:434px;width:61px">11</div>
<div class="ct r" style="top:481px;left:498px;width:61px">14</div>
<div class="ct r" style="top:501px;left:26px;width:54px">11</div>
<div class="ct" style="top:501px;left:92px">7th Avenue IB</div>
<div class="ct" style="top:501px;left:302px">17:18</div>
<div class="ct r" style="top:501px;left:370px;width:61px">0</div>
<div class="ct r" style="top:501px;left:434px;width:61px">2</div>
<div class="ct r" style="top:501px;left:498px;width:61px">2</div>
<div class="ct r" style="top:521px;left:26px;width:54px">11</div>
<div class="ct" style="top:521px;left:92px">7th Avenue IB</div>
<div class="ct" style="top:521px;left:302px">18:18</div>
<div class="ct r" style="top:521px;left:370px;width:61px">0</div>
<div class="ct r" style="top:521px;left:434px;width:61px">0</div>
<div class="ct r" style="top:521px;left:498px;width:61px">0</div>
<div class="ct r" style="top:541px;left:26px;width:54px">20</div>
<div class="ct" style="top:541px;left:92px">Broadway OB</div>
<div class="ct" style="top:541px;left:302px">06:11</div>
<div class="ct r" style="top:541px;left:370px;width:61px">2</div>
<div class="ct r" style="top:541px;left:434px;width:61px">0</div>
<div class="ct r" style="top:541px;left:498px;width:61px">2</div>
<div class="ct r" style="top:561px;left:26px;width:54px">20</div>
<div class="ct" style="top:561px;left:92px">Broadway OB</div>
<div class="ct" style="top:561px;left:302px">06:30</div>
<div class="ct r" style="top:561px;left:370px;width:61px">7</div>
<div class="ct r" style="top:561px;left:434px;width:61px">3</div>
<div class="ct r" style="top:561px;left:498px;width:61px">4</div>
<div class="ct r" style="top:581px;left:26px;width:54px">20</div>
<div class="ct" style="top:581px;left:92px">Broadway OB</div>
<div class="ct" style="top:581px;left:302px">07:00</div>
<div class="ct r" style="top:581px;left:370px;width:61px">8</div>
<div class="ct r" style="top:581px;left:434px;width:61px">1</div>
<div class="ct r" style="top:581px;left:498px;width:61px">7</div>
<div class="ct r" style="top:601px;left:26px;width:54px">20</div>
<div class="ct" style="top:601px;left:92px">Broadway OB</div>
<div class="ct" style="top:601px;left:302px">07:30</div>
<div class="ct r" style="top:601px;left:370px;width:61px">10</div>
<div class="ct r" style="top:601px;left:434px;width:61px">3</div>
<div class="ct r" style="top:601px;left:498px;width:61px">8</div>
<div class="ct r" style="top:621px;left:26px;width:54px">20</div>
<div class="ct" style="top:621px;left:92px">Broadway OB</div>
<div class="ct" style="top:621px;left:302px">08:00</div>
<div class="ct r" style="top:621px;left:370px;width:61px">7</div>
<div class="ct r" style="top:621px;left:434px;width:61px">0</div>
<div class="ct r" style="top:621px;left:498px;width:61px">7</div>
<div class="ct r" style="top:641px;left:26px;width:54px">20</div>
<div class="ct" style="top:641px;left:92px">Broadway OB</div>
<div class="ct" style="top:641px;left:302px">08:30</div>
<div class="ct r" style="top:641px;left:370px;width:61px">13</div>
<div class="ct r" style="top:641px;left:434px;width:61px">7</div>
<div class="ct r" style="top:641px;left:498px;width:61px">7</div>
<div class="ct r" style="top:661px;left:26px;width:54px">20</div>
<div class="ct" style="top:661px;left:92px">Broadway OB</div>
<div class="ct" style="top:661px;left:302px">09:30</div>
<div class="ct r" style="top:661px;left:370px;width:61px">10</div>
<div class="ct r" style="top:661px;left:434px;width:61px">5</div>
<div class="ct r" style="top:661px;left:498px;width:61px">5</div>
<div class="ct r" style="top:681px;left:26px;width:54px">20</div>
<div class="ct" style="top:681px;left:92px">Broadway OB</div>
<div class="ct" style="top:681px;left:302px">10:30</div>
<div class="ct r" style="top:681px;left:370px;width:61px">11</div>
<div class="ct r" style="top:681px;left:434px;width:61px">3</div>
<div class="ct r" style="top:681px;left:498px;width:61px">9</div>
<div class="ct r" style="top:701px;left:26px;width:54px">20</div>
<div class="ct" style="top:701px;left:92px">Broadway OB</div>
<div class="ct" style="top:701px;left:302px">11:30</div>
<div class="ct r" style="top:701px;left:370px;width:61px">13</div>
<div class="ct r" style="top:701px;left:434px;width:61px">5</div>
<div class="ct r" style="top:701px;left:498px;width:61px">13</div>
<div class="ct r" style="top:721px;left:26px;width:54px">20</div>
<div class="ct" style="top:721px;left:92px">Broadway OB</div>
<div class="ct" style="top:721px;left:302px">12:30</div>
<div class="ct r" style="top:721px;left:370px;width:61px">15</div>
<div class="ct r" style="top:721px;left:434px;width:61px">8</div>
<div class="ct r" style="top:721px;left:498px;width:61px">11</div>
<div class="ct r" style="top:741px;left:26px;width:54px">20</div>
<div class="ct" style="top:741px;left:92px">Broadway OB</div>
<div class="ct" style="top:741px;left:302px">13:30</div>
<div class="ct r" style="top:741px;left:370px;width:61px">15</div>
<div class="ct r" style="top:741px;left:434px;width:61px">11</div>
<div class="ct r" style="top:741px;left:498px;width:61px">10</div>
<div class="ct r" style="top:761px;left:26px;width:54px">20</div>
<div class="ct" style="top:761px;left:92px">Broadway OB</div>
<div class="ct" style="top:761px;left:302px">14:30</div>
<div class="ct r" style="top:761px;left:370px;width:61px">18</div>
<div class="ct r" style="top:761px;left:434px;width:61px">15</div>
<div class="ct r" style="top:761px;left:498px;width:61px">12</div>
<div class="ct r" style="top:781px;left:26px;width:54px">20</div>
<div class="ct" style="top:781px;left:92px">Broadway OB</div>
<div class="ct" style="top:781px;left:302px">15:00</div>
<div class="ct r" style="top:781px;left:370px;width:61px">10</div>
<div class="ct r" style="top:781px;left:434px;width:61px">7</div>
<div class="ct r" style="top:781px;left:498px;width:61px">8</div>
<div class="ct r" style="top:801px;left:26px;width:54px">20</div>
<div class="ct" style="top:801px;left:92px">Broadway OB</div>
<div class="ct" style="top:801px;left:302px">15:30</div>
<div class="ct r" style="top:801px;left:370px;width:61px">15</div>
<div class="ct r" style="top:801px;left:434px;width:61px">8</div>
<div class="ct r" style="top:801px;left:498px;width:61px">8</div>
<div class="ct r" style="top:821px;left:26px;width:54px">20</div>
<div class="ct" style="top:821px;left:92px">Broadway OB</div>
<div class="ct" style="top:821px;left:302px">16:00</div>
<div class="ct r" style="top:821px;left:370px;width:61px">13</div>
<div class="ct r" style="top:821px;left:434px;width:61px">5</div>
<div class="ct r" style="top:821px;left:498px;width:61px">9</div>
<div class="ct r" style="top:841px;left:26px;width:54px">20</div>
<div class="ct" style="top:841px;left:92px">Broadway OB</div>
<div class="ct" style="top:841px;left:302px">16:30</div>
<div class="ct r" style="top:841px;left:370px;width:61px">13</div>
<div class="ct r" style="top:841px;left:434px;width:61px">10</div>
<div class="ct r" style="top:841px;left:498px;width:61px">11</div>
<div class="rhsep"></div><div class="hdrline"></div><div style="position:absolute;left:1px;top:850px;width:1355px;height:1px;background:#a9a9a9"></div>
<div class="gridclip"></div>
<div class="selbox"></div><div class="fillh"></div>
</div>
<div id="bottom">
<!-- vertical scrollbar -->
<svg class="a" style="left:1360px;top:223px" width="12" height="10"><path d="M1.5 8.5 L6 2.5 L10.5 8.5 Z" fill="#6e6e6e" stroke="#6e6e6e" stroke-width="1.2" stroke-linejoin="round"/></svg>
<div class="a" style="left:1362px;top:237px;width:9px;height:26px;border-radius:4.5px;background:#727272"></div>
<svg class="a" style="left:1360px;top:839px" width="12" height="10"><path d="M1.5 1.5 L6 7.5 L10.5 1.5 Z" fill="#6e6e6e" stroke="#6e6e6e" stroke-width="1.2" stroke-linejoin="round"/></svg>
<!-- sheet tabs bar -->
<div class="a" style="left:0;top:851px;width:1378px;height:27px;background:#f5f5f5"></div>
<svg class="a" style="left:27px;top:858px" width="8" height="12"><path d="M6 2 L2 6 L6 10 Z" fill="#c8c8c8" stroke="#c8c8c8" stroke-linejoin="round"/></svg>
<svg class="a" style="left:55px;top:858px" width="8" height="12"><path d="M2 2 L6 6 L2 10 Z" fill="#c8c8c8" stroke="#c8c8c8" stroke-linejoin="round"/></svg>
<div class="a" style="left:101px;top:856px;width:1px;height:18px;background:#bdbdbd"></div>
<div class="a t13" style="left:115px;top:856px;letter-spacing:0.15px;color:#444">Rte Totals</div>
<div class="a" style="left:187px;top:850px;width:85px;height:25px;background:#fff;border-left:1px solid #a9a9a9;border-right:1px solid #a9a9a9"></div>
<div class="a" style="left:187px;top:873px;width:85px;height:2px;background:#1e6b41"></div>
<div class="a t13" style="left:199px;top:856px;color:#1e6b41;font-weight:bold;letter-spacing:-0.1px">Max Load</div>
<div class="a t13" style="left:286px;top:856px;letter-spacing:0.2px;color:#444">Ons Offs Tot &amp; Ld</div>
<div class="a" style="left:408px;top:856px;width:1px;height:18px;background:#bdbdbd"></div>
<div class="a t13" style="left:424px;top:856px;letter-spacing:0.05px;color:#444">On Time Detail</div>
<div class="a" style="left:526px;top:856px;width:1px;height:18px;background:#bdbdbd"></div>
<div class="a t13" style="left:540px;top:856px;letter-spacing:0.1px;color:#444">Detail Report</div>
<div class="a" style="left:632px;top:856px;width:1px;height:18px;background:#bdbdbd"></div>
<div class="a t13" style="left:644px;top:856px;color:#444">Notes</div>
<div class="a" style="left:691px;top:856px;width:1px;height:18px;background:#bdbdbd"></div>
<svg class="a" style="left:723px;top:854px" width="19" height="19"><circle cx="9.5" cy="9.5" r="7.6" fill="none" stroke="#6b6b6b" stroke-width="1.1"/><path d="M9.5 5.5 V13.5 M5.5 9.5 H13.5" stroke="#555" stroke-width="1.6"/></svg>
<div class="a" style="left:813px;top:851px;width:28px;height:27px;background:#efefef"></div>
<svg class="a" style="left:825px;top:858px" width="4" height="13"><circle cx="2" cy="2" r="1" fill="#909090"/><circle cx="2" cy="6.5" r="1" fill="#909090"/><circle cx="2" cy="11" r="1" fill="#909090"/></svg>
<svg class="a" style="left:845px;top:858px" width="9" height="11"><path d="M7.5 1.5 L2 5.5 L7.5 9.5 Z" fill="#6e6e6e" stroke="#6e6e6e" stroke-width="1.2" stroke-linejoin="round"/></svg>
<div class="a" style="left:858px;top:859px;width:457px;height:9px;border-radius:4.5px;background:#727272"></div>
<svg class="a" style="left:1345px;top:858px" width="9" height="11"><path d="M1.5 1.5 L7 5.5 L1.5 9.5 Z" fill="#6e6e6e" stroke="#6e6e6e" stroke-width="1.2" stroke-linejoin="round"/></svg>
<!-- status bar -->
<div class="a" style="left:0;top:878px;width:1378px;height:23px;background:#f3f3f3;border-top:1px solid #fdfdfd"></div>
<div class="a" style="left:9px;top:884px;font-size:11.5px;line-height:13px;letter-spacing:-0.5px;color:#262626">Ready</div>
<svg class="a" style="left:58px;top:882px" width="17" height="15" viewBox="0 0 17 15">
<path d="M6.5 13.5 H1.5 V1.5 H14.5 V6" fill="none" stroke="#222" stroke-width="1.1"/>
<path d="M1.5 3.5 H14.5" stroke="#222" stroke-width="1"/>
<path d="M3 6.5 H5 M3 9 H5 M3 11.5 H5" stroke="#222" stroke-width="1"/>
<circle cx="10.6" cy="9.4" r="4.1" fill="#f3f3f3" stroke="#222" stroke-width="1.1"/>
<circle cx="10.6" cy="9.4" r="1.7" fill="#222"/>
</svg>
<svg class="a" style="left:86px;top:878px" width="24" height="22" viewBox="86 878 24 22">
<circle cx="97" cy="884.1" r="1.8" fill="none" stroke="#222" stroke-width="1.1"/>
<path d="M94.6 887.6 L91.6 885.7 Q90.6 884.9 91.4 884.3 Q92 883.9 92.8 884.5 L95.2 886 H98.8 L101.2 884.5 Q102 883.9 102.6 884.3 Q103.4 884.9 102.4 885.7 L99.4 887.6 V890.6" fill="none" stroke="#222" stroke-width="1.1" stroke-linejoin="round"/>
<path d="M94.6 887.6 V889.5 Q94.6 892.8 93.3 894.6 Q93.2 895.8 95.4 895.6" fill="none" stroke="#222" stroke-width="1.1"/>
<path d="M97.2 892.2 L100.4 895.6 L105.5 890.2" fill="none" stroke="#222" stroke-width="1.1"/>
</svg>
<div class="a" style="left:108px;top:884px;font-size:11.5px;line-height:13px;letter-spacing:0.1px;color:#262626">Accessibility: Good to go</div>
<div class="a" style="left:1066px;top:879px;width:40px;height:20px;background:#dcdcdc"></div>
<svg class="a" style="left:1078px;top:881px" width="16" height="16" viewBox="0 0 16 16">
<path d="M1.5 1.5 H14.5 V14.5 H1.5 Z M1.5 5.8 H14.5 M1.5 10.2 H14.5 M5.8 1.5 V14.5 M10.2 1.5 V14.5" fill="none" stroke="#222" stroke-width="1.4"/>
</svg>
<svg class="a" style="left:1118px;top:881px" width="16" height="16" viewBox="0 0 16 16">
<rect x="1.5" y="1.5" width="13" height="13" fill="none" stroke="#222" stroke-width="1.2"/>
<rect x="4.5" y="4" width="7" height="8" fill="none" stroke="#222" stroke-width="1.1"/>
<path d="M6 6.2 H10 M6 8 H10 M6 9.8 H10" stroke="#222" stroke-width="0.9"/>
</svg>
<svg class="a" style="left:1158px;top:881px" width="16" height="16" viewBox="0 0 16 16">
<path d="M1.5 1.5 H14.5 V14.5 H1.5 Z M1.5 9.5 H9.5 V1.5 M5.5 1.5 V9.5" fill="none" stroke="#222" stroke-width="1.2"/>
</svg>
<div class="a" style="left:1192px;top:888px;width:8px;height:1.3px;background:#444"></div>
<div class="a" style="left:1205px;top:889px;width:100px;height:1px;background:#6b6b6b"></div>
<div class="a" style="left:1253px;top:884px;width:5px;height:11px;background:#6b6b6b;border-radius:1px"></div>
<svg class="a" style="left:1309px;top:883px" width="10" height="12"><path d="M5 1 V11 M0.5 6 H9.5" stroke="#444" stroke-width="1.1"/></svg>
<div class="a" style="left:1331px;top:884px;font-size:11.5px;line-height:13px;letter-spacing:-0.3px;color:#262626">100%</div>
</div>

</div>
<div id="frame"></div>
</body></html>
